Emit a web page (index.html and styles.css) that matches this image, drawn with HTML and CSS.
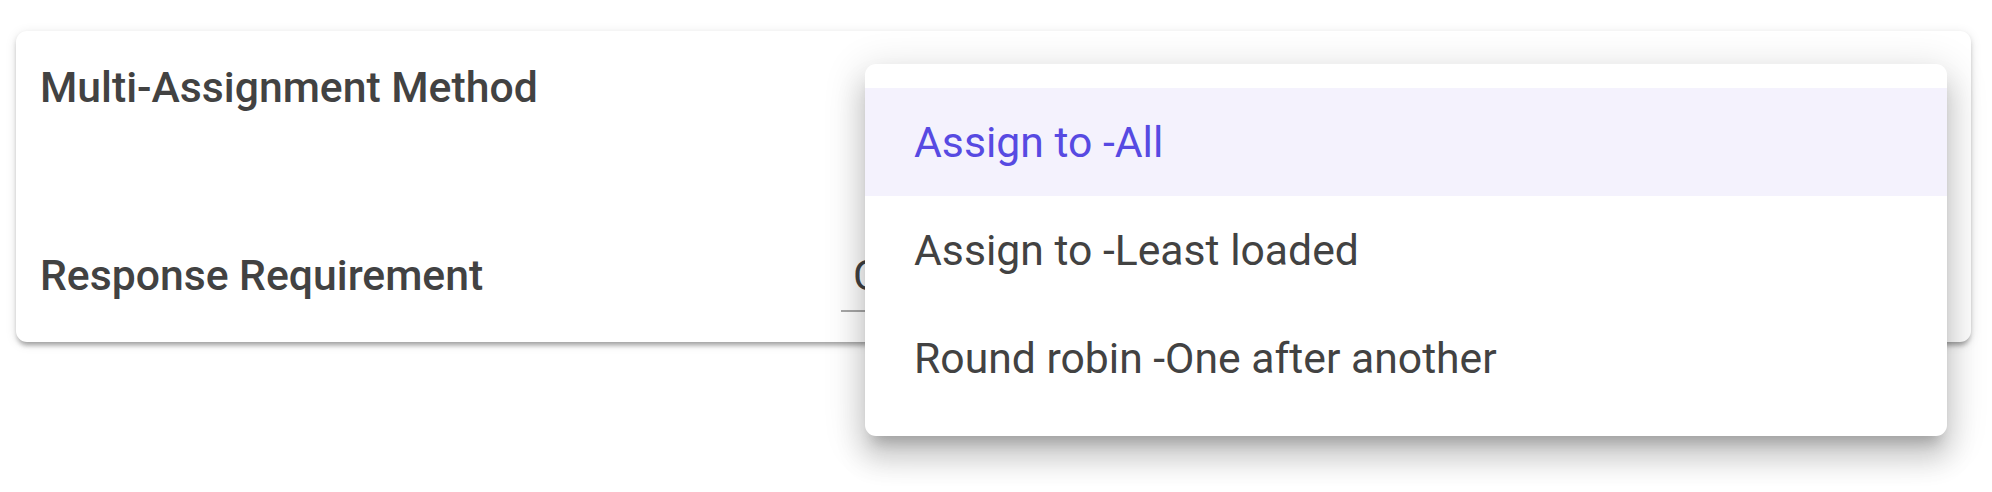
FILE: index.html
```html
<!DOCTYPE html>
<html lang="en">
<head>
	<meta charset="UTF-8">
	<title>Assignment settings</title>
	<link rel="stylesheet" href="styles.css">
</head>
<body>
	<div class="page">
		<div class="card">
			<div class="row">
				<div class="label">Multi-Assignment Method</div>
				<div class="field open"></div>
			</div>
			<div class="row">
				<div class="label">Response Requirement</div>
				<div class="field">Compulsory</div>
			</div>
		</div>

		<ul class="menu">
			<li class="selected">Assign to -All</li>
			<li>Assign to -Least loaded</li>
			<li>Round robin -One after another</li>
		</ul>
	</div>
</body>
</html>
```

FILE: styles.css
```css
*{ padding: 0; margin: 0; list-style: none; box-sizing: border-box;}
body{ background: #fff; font-family: Roboto, "Liberation Sans", sans-serif; color: #424242;}
.page{ position: relative; padding: 31px 21px 0 16px; height: 492px;}

.card{ background: #fff; border-radius: 11px; padding: 31px 24px 30px 24px; display: grid; row-gap: 126px;
	box-shadow: 0 6px 5px -3px rgba(0,0,0,.22), 0 3px 5px 0 rgba(0,0,0,.14), 0 2px 12px 0 rgba(0,0,0,.1);}
.row{ display: flex; align-items: flex-end;}
.label{ flex: 0 0 801px; font-size: 42.7px; font-weight: 500; padding-bottom: 12px;}
.field{ flex: 1; font-size: 42.7px; padding: 0 0 10px 12px; border-bottom: 2px solid #a8a8a8; white-space: nowrap; overflow: hidden;}
.field.open{ border-bottom-color: transparent; min-height: 62px;}

.menu{ position: absolute; left: 865px; top: 64px; width: 1082px; padding: 24px 0; background: #fff; border-radius: 11px;
	box-shadow: 0 14px 14px -8px rgba(0,0,0,.2), 0 22px 28px 3px rgba(0,0,0,.14), 0 8px 38px 6px rgba(0,0,0,.12);}
.menu li{ height: 108px; display: flex; align-items: center; padding: 0 49px; font-size: 42.7px; white-space: nowrap;}
.menu li.selected{ background: #f4f2fd; color: #574ae2;}
```
